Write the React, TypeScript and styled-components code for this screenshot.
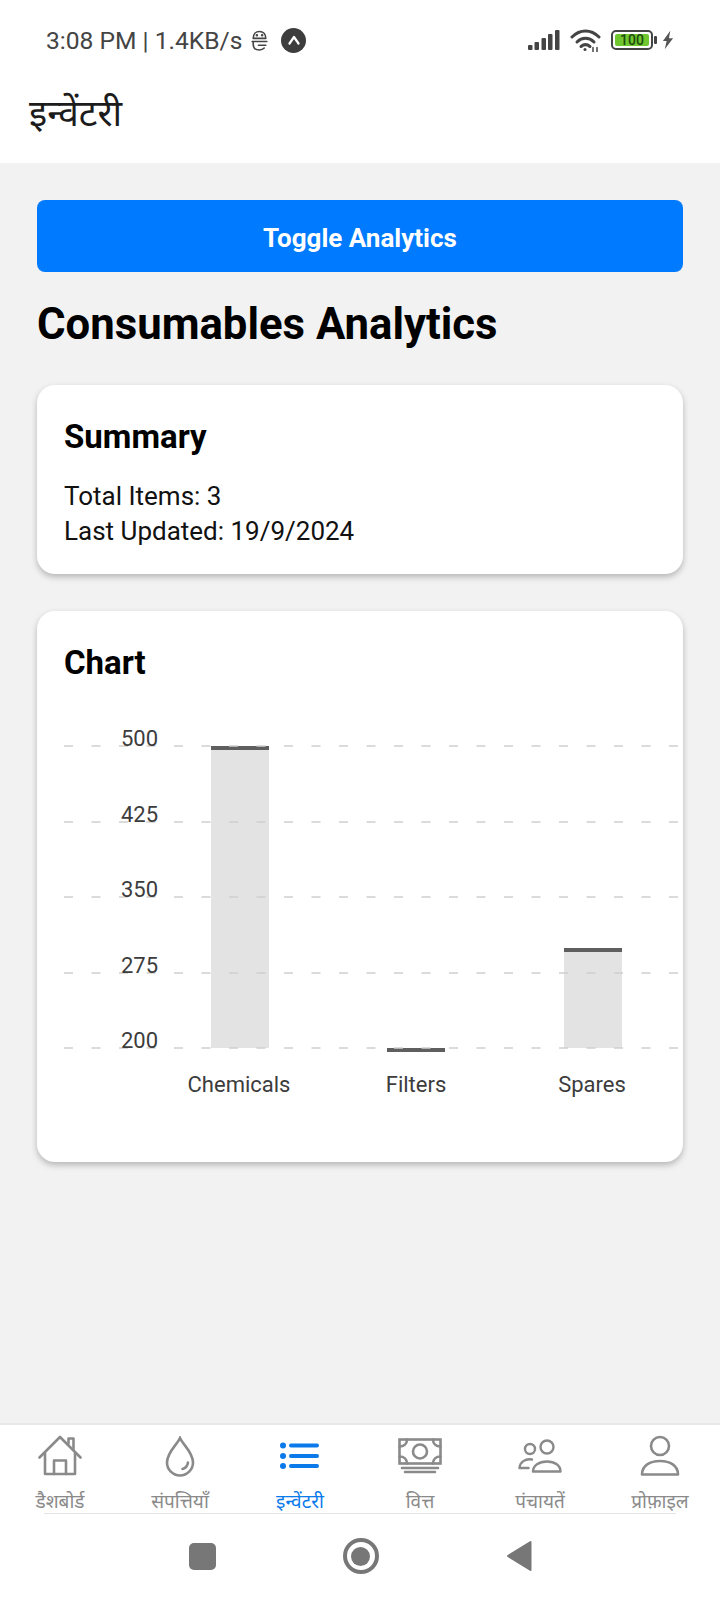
import React from "react";
import styled, { createGlobalStyle } from "styled-components";

const GlobalStyle = createGlobalStyle`
  html, body {
    margin: 0;
    padding: 0;
    background: #fff;
  }
  * {
    box-sizing: border-box;
  }
`;

const FONT = `Roboto, "Noto Sans Devanagari", "Noto Sans", "Lohit Devanagari", sans-serif`;
const HINDI = `"Noto Sans Devanagari", "Noto Sans", "Lohit Devanagari", Roboto, sans-serif`;

const GRID = [
  { y: 746, label: "500" },
  { y: 822, label: "425" },
  { y: 897, label: "350" },
  { y: 973, label: "275" },
  { y: 1048, label: "200" },
];

const BARS = [
  { x: 211, top: 746, label: "Chemicals", cx: 239 },
  { x: 387, top: 1048, label: "Filters", cx: 416 },
  { x: 564, top: 948, label: "Spares", cx: 592 },
];

const HomeIcon = () => (
  <svg width="44" height="42" viewBox="0 0 44 42" fill="none" stroke="currentColor" strokeWidth="2.6" strokeLinejoin="round" strokeLinecap="round">
    <path d="M1.5 22.5 22 2l20.500 20.500" />
    <path d="M7 18v21h30V18" />
    <path d="M16 39V25.500h12V39" />
    <path d="M30.500 8.500V3.500h5v10.500" />
  </svg>
);

const DropIcon = () => (
  <svg width="30" height="41" viewBox="0 0 30 41" fill="none" stroke="currentColor" strokeWidth="2.6" strokeLinecap="round">
    <path d="M15 2c3 7 13 14 13 24.500a13 13 0 0 1-26 0C2 16 12 9 15 2Z" />
    <path d="M23 26.500c-.5 3.500-2 5.500-5.500 6.500" />
  </svg>
);

const ListIcon = () => (
  <svg width="40" height="28" viewBox="0 0 40 28" fill="#0a7aea">
    <circle cx="3" cy="3.500" r="3" />
    <circle cx="3" cy="14" r="3" />
    <circle cx="3" cy="24" r="3" />
    <rect x="9" y="1.500" width="30" height="4" rx="2" />
    <rect x="9" y="12" width="30" height="4" rx="2" />
    <rect x="9" y="22" width="30" height="4" rx="2" />
  </svg>
);

const MoneyIcon = () => (
  <svg width="44" height="36" viewBox="0 0 44 36" fill="none" stroke="currentColor" strokeWidth="2.6" strokeLinecap="round">
    <rect x="1.500" y="1.500" width="41" height="24" />
    <circle cx="22" cy="13.500" r="7" />
    <path d="M9 1.500c0 4-3 7-7.500 7M35 1.500c0 4 3 7 7.500 7M9 25.500c0-4-3-7-7.500-7M35 25.500c0-4 3-7 7.500-7" />
    <path d="M4 30h36M7 34h30" />
  </svg>
);

const PeopleIcon = () => (
  <svg width="44" height="34" viewBox="0 0 44 34" fill="none" stroke="currentColor" strokeWidth="2.4" strokeLinecap="round" strokeLinejoin="round">
    <circle cx="29" cy="8" r="6.500" />
    <circle cx="12" cy="10" r="5" />
    <path d="M15 32.500c0-6 6-10 14-10s13.500 4 13.500 10Z" />
    <path d="M14 20.500c-7-1-12 2.500-12.500 8.500h9" />
  </svg>
);

const PersonIcon = () => (
  <svg width="40" height="42" viewBox="0 0 40 42" fill="none" stroke="currentColor" strokeWidth="2.6" strokeLinejoin="round">
    <circle cx="20" cy="11" r="9" />
    <path d="M2 39.500c0-9 8-13.500 18-13.500s18 4.500 18 13.500Z" />
  </svg>
);

const TABS = [
  { label: "डैशबोर्ड", icon: <HomeIcon /> },
  { label: "संपत्तियाँ", icon: <DropIcon /> },
  { label: "इन्वेंटरी", icon: <ListIcon />, active: true },
  { label: "वित्त", icon: <MoneyIcon /> },
  { label: "पंचायतें", icon: <PeopleIcon /> },
  { label: "प्रोफ़ाइल", icon: <PersonIcon /> },
];

const App = () => (
  <>
    <GlobalStyle />
    <Screen>
      <StatusBar>
        <StatusLeft>
          <StatusText>3:08 PM | 1.4KB/s</StatusText>
          <svg width="17" height="21" viewBox="0 0 16 20" fill="none" stroke="#444" strokeWidth="1.500" strokeLinecap="round" strokeLinejoin="round">
            <path d="M2 8c0-4 2.500-6.500 6-6.500S14 4 14 8H2Z" />
            <path d="M1 11h14M2 11v2.500c0 3.500 2.500 5.500 6 5.500 2 0 3.500-.7 4.500-1.800M7 14.500h7" />
            <circle cx="5.500" cy="5" r=".5" fill="#444" />
            <circle cx="10.500" cy="5" r=".5" fill="#444" />
          </svg>
          <AppBadge>
            <svg width="14" height="10" viewBox="0 0 14 10" fill="none" stroke="#fff" strokeWidth="2.200" strokeLinecap="round" strokeLinejoin="round">
              <path d="M2.500 8.500 7 2l4.500 6.500" />
            </svg>
          </AppBadge>
        </StatusLeft>
        <StatusRight>
          <svg width="32" height="21" viewBox="0 0 32 21" fill="#444">
            <rect x="0" y="15" width="4.500" height="5" rx="1" />
            <rect x="6.500" y="12" width="4.500" height="8" rx="1" />
            <rect x="13.500" y="8" width="4.500" height="12" rx="1" />
            <rect x="20" y="4" width="4.500" height="16" rx="1" />
            <rect x="27" y="0" width="4.500" height="20" rx="1" />
          </svg>
          <svg width="31" height="23" viewBox="0 0 31 23" fill="none" stroke="#444" strokeWidth="3" strokeLinecap="round">
            <path d="M2 8c8-8 19-8 27 0" />
            <path d="M7 13c5-5 12-5 17 0" />
            <path d="M11 17.500c3-2.500 6-2.500 9 0" />
            <circle cx="15" cy="20.500" r="1.500" fill="#444" stroke="none" />
            <path d="M23 18.500v4M27 18.500v4" strokeWidth="1.500" />
          </svg>
          <BatteryRow>
            <Battery>
              <BatteryFill>100</BatteryFill>
            </Battery>
            <BatteryCap />
            <svg width="12" height="20" viewBox="0 0 13 20" fill="#555">
              <path d="M9 0 1 11h4l-2 9 9-12H7.500L9 0Z" />
            </svg>
          </BatteryRow>
        </StatusRight>
      </StatusBar>

      <Header>
        <HeaderTitle>इन्वेंटरी</HeaderTitle>
      </Header>

      <Main>
        <ToggleButton>Toggle Analytics</ToggleButton>
        <PageTitle>Consumables Analytics</PageTitle>

        <SummaryCard>
          <CardTitle>Summary</CardTitle>
          <SummaryText>Total Items: 3</SummaryText>
          <SummaryText>Last Updated: 19/9/2024</SummaryText>
        </SummaryCard>

        <ChartCard>
          <CardTitle>Chart</CardTitle>
          <ChartSvg viewBox="37 700 646 420" width="646" height="420">
            {BARS.map((bar) => (
              <g key={bar.label}>
                <rect x={bar.x} y={bar.top} width="58" height={1048 - bar.top} fill="#e3e3e3" />
                <rect x={bar.x} y={bar.top} width="58" height="4" fill="#5f5f5f" />
              </g>
            ))}
            {GRID.map((row) => (
              <g key={row.label}>
                <line x1="64" x2="683" y1={row.y} y2={row.y} stroke="#cfcfcf" strokeWidth="1.500" strokeDasharray="9 18.500" />
                <ChartLabel x="158" y={row.y} textAnchor="end">
                  {row.label}
                </ChartLabel>
              </g>
            ))}
            {BARS.map((bar) => (
              <ChartLabel key={bar.label} x={bar.cx} y="1092" textAnchor="middle">
                {bar.label}
              </ChartLabel>
            ))}
          </ChartSvg>
        </ChartCard>
      </Main>

      <TabBar>
        {TABS.map((tab) => (
          <Tab key={tab.label} $active={tab.active}>
            <TabIcon>{tab.icon}</TabIcon>
            <TabLabel>{tab.label}</TabLabel>
          </Tab>
        ))}
      </TabBar>
      <TabRule />

      <SystemNav>
        <StopKey />
        <HomeKey />
        <svg width="26" height="32" viewBox="0 0 26 32" fill="#777" stroke="#777" strokeWidth="2" strokeLinejoin="round">
          <path d="M24.500 2v28L2 16Z" />
        </svg>
      </SystemNav>
    </Screen>
  </>
);

export default App;

const Screen = styled.div`
  display: flex;
  flex-direction: column;
  width: 720px;
  height: 1600px;
  overflow: hidden;
  background: #fff;
  font-family: ${FONT};
`;

const StatusBar = styled.div`
  display: flex;
  align-items: center;
  justify-content: space-between;
  height: 80px;
  padding: 0 46px 0 46px;
`;

const StatusLeft = styled.div`
  display: flex;
  align-items: center;
  gap: 9px;
`;

const StatusText = styled.span`
  font-size: 24.6px;
  color: #444;
`;

const AppBadge = styled.span`
  display: flex;
  align-items: center;
  justify-content: center;
  width: 25px;
  height: 25px;
  margin-left: 4px;
  border-radius: 50%;
  background: #3d3d3d;
`;

const StatusRight = styled.div`
  display: flex;
  align-items: center;
  gap: 10px;
`;

const BatteryRow = styled.div`
  display: flex;
  align-items: center;
  gap: 1px;

  svg {
    margin-left: 4px;
  }
`;

const Battery = styled.div`
  width: 42px;
  height: 20px;
  padding: 2px;
  border: 2px solid #444;
  border-radius: 5px;
`;

const BatteryFill = styled.div`
  height: 100%;
  border-radius: 2px;
  background: #6fc62f;
  color: #1c4a10;
  font-size: 14px;
  font-weight: 500;
  line-height: 12px;
  text-align: center;
`;

const BatteryCap = styled.div`
  width: 3px;
  height: 8px;
  border-radius: 1px;
  background: #444;
`;

const Header = styled.div`
  display: flex;
  align-items: center;
  height: 83px;
  padding: 0 29px 9px;
`;

const HeaderTitle = styled.h1`
  margin: 0;
  font-family: ${HINDI};
  font-size: 37px;
  line-height: 50px;
  font-weight: 400;
  color: #1c1c1c;
`;

const Main = styled.main`
  display: flex;
  flex: 1;
  flex-direction: column;
  padding: 37px 37px 0;
  background: #f2f2f2;
`;

const ToggleButton = styled.button`
  height: 72px;
  padding: 3px 0 0;
  border: none;
  border-radius: 8px;
  background: #007aff;
  color: #fff;
  font-family: ${FONT};
  font-size: 26px;
  font-weight: 700;
`;

const PageTitle = styled.h2`
  margin: 24px 0 33px;
  font-size: 43.7px;
  line-height: 56px;
  font-weight: 700;
  color: #000;
`;

const Card = styled.section`
  padding: 30px 27px 27px;
  border-radius: 18px;
  background: #fff;
  box-shadow: 0 3px 6px rgba(0, 0, 0, 0.25);
`;

const SummaryCard = styled(Card)`
  height: 189px;
  margin-bottom: 37px;
`;

const ChartCard = styled(Card)`
  height: 551px;
  padding-bottom: 0;
`;

const CardTitle = styled.h3`
  margin: 0 0 20px;
  font-size: 33px;
  line-height: 44px;
  font-weight: 700;
  color: #000;
`;

const SummaryText = styled.p`
  margin: 0;
  font-size: 26px;
  line-height: 35px;
  color: #111;
`;

const ChartSvg = styled.svg`
  display: block;
  margin: -5px -27px 0;
`;

const ChartLabel = styled.text`
  font-family: ${FONT};
  font-size: 22px;
  fill: #3c3c3c;
`;

const TabBar = styled.nav`
  display: grid;
  grid-template-columns: repeat(6, 120px);
  height: 90px;
  border-top: 2px solid #e8e8e8;
  background: #fff;
`;

const Tab = styled.div<{ $active?: boolean }>`
  display: flex;
  flex-direction: column;
  align-items: center;
  color: ${(props) => (props.$active ? "#0a7aea" : "#8a8a8a")};
`;

const TabIcon = styled.div`
  display: flex;
  align-items: center;
  justify-content: center;
  height: 44px;
  margin-top: 9px;
`;

const TabLabel = styled.span`
  margin-top: 18px;
  font-family: ${HINDI};
  font-size: 19px;
  line-height: 16px;
  white-space: nowrap;
`;

const TabRule = styled.div`
  height: 1px;
  margin: 0 44px;
  background: #e4e4e4;
`;

const SystemNav = styled.div`
  display: flex;
  flex: none;
  align-items: center;
  justify-content: center;
  gap: 127px;
  height: 86px;
  padding-bottom: 2px;
  background: #fff;
`;

const StopKey = styled.div`
  width: 27px;
  height: 27px;
  border-radius: 5px;
  background: #777;
`;

const HomeKey = styled.div`
  display: flex;
  align-items: center;
  justify-content: center;
  width: 36px;
  height: 36px;
  border: 4px solid #777;
  border-radius: 50%;

  &::after {
    content: "";
    width: 19px;
    height: 19px;
    border-radius: 50%;
    background: #777;
  }
`;
